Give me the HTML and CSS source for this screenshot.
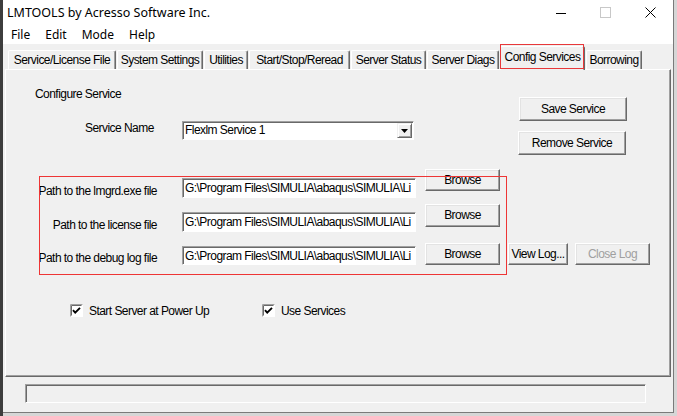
FILE: index.html
```html
<!DOCTYPE html>
<html>
<head>
<meta charset="utf-8">
<title>LMTOOLS</title>
<link rel="stylesheet" href="styles.css">
</head>
<body>
<div class="window">
  <div class="titlebar">
    <span class="title">LMTOOLS by Acresso Software Inc.</span>
    <div class="controls">
      <span class="ctl"><svg width="10" height="10" viewBox="0 0 10 10"><path d="M0 5.5H10" stroke="#000" stroke-width="1"/></svg></span>
      <span class="ctl"><svg width="11" height="11" viewBox="0 0 11 11"><rect x="0.5" y="0.5" width="10" height="10" fill="none" stroke="#c8c8c8" stroke-width="1"/></svg></span>
      <span class="ctl"><svg width="11" height="11" viewBox="0 0 11 11"><path d="M0.5 0.5L10.5 10.5M10.5 0.5L0.5 10.5" stroke="#000" stroke-width="1"/></svg></span>
    </div>
  </div>
  <div class="menubar">
    <span>File</span><span>Edit</span><span>Mode</span><span>Help</span>
  </div>
  <div class="tabs">
    <div class="tab t-license">Service/License File</div>
    <div class="tab t-system">System Settings</div>
    <div class="tab t-util">Utilities</div>
    <div class="tab t-start">Start/Stop/Reread</div>
    <div class="tab t-status">Server Status</div>
    <div class="tab t-diags">Server Diags</div>
    <div class="tab t-config active">Config Services</div>
    <div class="tab t-borrow">Borrowing</div>
  </div>
  <div class="panel">
    <div class="top">
      <div class="left">
        <div class="cs-title">Configure Service</div>
        <div class="svc-row">
          <span class="svc-label">Service Name</span>
          <div class="combo">
            <span class="combo-text">Flexlm Service 1</span>
            <span class="drop"><svg width="7" height="4" viewBox="0 0 7 4"><path d="M0 0H7L3.5 4Z" fill="#000"/></svg></span>
          </div>
        </div>
      </div>
      <div class="right">
        <button class="btn wide save">Save Service</button>
        <button class="btn wide">Remove Service</button>
      </div>
    </div>
    <div class="paths">
      <div class="annot"></div>
      <div class="prow r1">
        <span class="plabel">Path to the lmgrd.exe file</span>
        <div class="pinput">G:\Program Files\SIMULIA\abaqus\SIMULIA\Li</div>
        <button class="btn browse">Browse</button>
      </div>
      <div class="prow r2">
        <span class="plabel">Path to the license file</span>
        <div class="pinput">G:\Program Files\SIMULIA\abaqus\SIMULIA\Li</div>
        <button class="btn browse">Browse</button>
      </div>
      <div class="prow r3">
        <span class="plabel">Path to the debug log file</span>
        <div class="pinput">G:\Program Files\SIMULIA\abaqus\SIMULIA\Li</div>
        <button class="btn browse">Browse</button>
        <button class="btn viewlog">View Log...</button>
        <button class="btn closelog" disabled>Close Log</button>
      </div>
    </div>
    <div class="checks">
      <label class="chk-item first">
        <svg class="chk" width="13" height="13" viewBox="0 0 13 13"><rect x="0" y="0" width="13" height="13" fill="#fff"/><path d="M0.5 12.5V0.5H12.5" fill="none" stroke="#a0a0a0"/><path d="M1.5 11.5V1.5H11.5" fill="none" stroke="#696969"/><path d="M3 6.2L5.2 8.6L10 3.8" fill="none" stroke="#000" stroke-width="1.9"/></svg>
        <span>Start Server at Power Up</span>
      </label>
      <label class="chk-item">
        <svg class="chk" width="13" height="13" viewBox="0 0 13 13"><rect x="0" y="0" width="13" height="13" fill="#fff"/><path d="M0.5 12.5V0.5H12.5" fill="none" stroke="#a0a0a0"/><path d="M1.5 11.5V1.5H11.5" fill="none" stroke="#696969"/><path d="M3 6.2L5.2 8.6L10 3.8" fill="none" stroke="#000" stroke-width="1.9"/></svg>
        <span>Use Services</span>
      </label>
    </div>
  </div>
  <div class="footer">
    <div class="status"></div>
  </div>
</div>
</body>
</html>
```

FILE: styles.css
```css
* { box-sizing: border-box; }
html, body { margin: 0; padding: 0; }
body {
  width: 677px;
  height: 416px;
  overflow: hidden;
  background: linear-gradient(to right, #3d3d3d 0 3px, #d6d6d6 3px);
  font-family: "Liberation Sans", Arial, sans-serif;
  font-size: 12px;
  letter-spacing: -0.55px;
  color: #000;
}
.window {
  margin-left: 3px;
  width: 671px;
  height: 413px;
  background: #f0f0f0;
  border-right: 1px solid #7a7a7a;
  border-bottom: 1px solid #7a7a7a;
  display: flex;
  flex-direction: column;
}
.titlebar {
  height: 25px;
  background: #fff;
  display: flex;
  align-items: center;
  padding-left: 4px;
  font-family: "Noto Sans", "Open Sans", sans-serif;
  font-size: 12.5px;
  letter-spacing: 0;
}
.controls { margin-left: auto; display: flex; height: 100%; }
.ctl {
  width: 45px;
  height: 100%;
  display: flex;
  align-items: center;
  justify-content: center;
}
.menubar {
  height: 19px;
  background: #fff;
  display: flex;
  align-items: center;
  gap: 15px;
  padding-left: 8px;
  font-family: "Noto Sans", "Open Sans", sans-serif;
  font-size: 12px;
  letter-spacing: 0;
}
.tabs {
  height: 25px;
  display: flex;
  align-items: flex-end;
  gap: 1px;
  padding-left: 5px;
  position: relative;
  z-index: 1;
}
.tab {
  height: 19px;
  padding: 0;
  text-align: center;
  line-height: 18px;
  white-space: nowrap;
  background: #f0f0f0;
  border-top: 1px solid #fff;
  border-left: 1px solid #fff;
  border-right: 1px solid #696969;
  border-radius: 2px 2px 0 0;
  box-shadow: inset -1px 0 #a0a0a0;
}
.t-license { width: 108px; }
.t-system { width: 86px; }
.t-util { width: 44px; }
.t-start { width: 101px; }
.t-status { width: 75px; }
.t-diags { width: 72px; }
.t-config { width: 85px; }
.t-borrow { width: 56px; }
.tab.active {
  position: relative;
  height: 24px;
  margin-bottom: -1px;
  padding-top: 2px;
  line-height: 17px;
}
.tab.active::after {
  content: "";
  position: absolute;
  left: -1px;
  right: 0;
  top: -3px;
  bottom: 1px;
  border: 1px solid #e8383a;
}
.panel {
  margin-left: 2px;
  width: 666px;
  height: 308px;
  border: 1px solid;
  border-color: #fff #696969 #696969 #fff;
  box-shadow: inset -1px -1px #a0a0a0;
}
.top {
  display: flex;
  justify-content: space-between;
  height: 85px;
}
.left { padding: 17px 0 0 29px; }
.cs-title { line-height: 15px; }
.svc-row {
  display: flex;
  align-items: center;
  margin-top: 19px;
}
.svc-label {
  width: 147px;
  padding-left: 50px;
  line-height: 15px;
  margin-top: -4px;
}
.combo {
  width: 232px;
  height: 19px;
  display: flex;
  align-items: center;
  background: #fff;
  border: 1px solid;
  border-color: #a0a0a0 #fff #fff #a0a0a0;
  box-shadow: inset 1px 1px #696969;
  padding-left: 2px;
}
.combo-text { line-height: 15px; }
.drop {
  margin-left: auto;
  margin-right: 1px;
  width: 15px;
  height: 15px;
  display: flex;
  align-items: center;
  justify-content: center;
  background: #f0f0f0;
  border: 1px solid;
  border-color: #f0f0f0 #696969 #696969 #f0f0f0;
  box-shadow: inset 1px 1px #fff, inset -1px -1px #a0a0a0;
}
.right {
  padding-top: 27px;
  margin-right: 44px;
  display: flex;
  flex-direction: column;
  align-items: flex-end;
  gap: 10px;
}
.btn {
  font-family: inherit;
  font-size: 12px;
  letter-spacing: -0.55px;
  color: #000;
  background: #f0f0f0;
  border: 1px solid;
  border-color: #fff #696969 #696969 #fff;
  box-shadow: inset -1px -1px #a0a0a0, inset 1px 1px #e3e3e3;
  padding: 0;
  height: 24px;
  line-height: 15px;
  white-space: nowrap;
}
.btn.wide { width: 108px; }
.btn.save { margin-right: -1px; }
.paths {
  position: relative;
  margin-top: 14px;
  display: flex;
  flex-direction: column;
}
.annot {
  position: absolute;
  left: 33px;
  top: 7px;
  width: 468px;
  height: 99px;
  border: 1px solid #ee3535;
  pointer-events: none;
}
.prow {
  display: flex;
  align-items: flex-start;
}
.plabel {
  width: 151px;
  margin-right: 25px;
  text-align: right;
  line-height: 15px;
  white-space: nowrap;
}
.pinput {
  width: 234px;
  height: 20px;
  background: #fff;
  border: 1px solid;
  border-color: #a0a0a0 #fff #fff #a0a0a0;
  box-shadow: inset 1px 1px #696969;
  padding: 1px 0 0 2px;
  line-height: 16px;
  white-space: nowrap;
  overflow: hidden;
}
.browse { width: 75px; height: 22px; margin-left: 9px; }
.r1 { height: 35px; }
.r1 .plabel { margin-top: 15px; }
.r1 .pinput { margin-top: 9px; }
.r2 { height: 39px; }
.r2 .plabel { margin-top: 14px; }
.r2 .pinput { margin-top: 8px; }
.r2 .browse { height: 23px; }
.r3 { height: 22px; }
.r3 .plabel { margin-top: 8px; }
.r3 .pinput { margin-top: 3px; height: 19px; }
.viewlog { width: 60px; height: 22px; margin-left: 8px; }
.closelog { width: 75px; height: 22px; margin-left: 7px; color: #a0a0a0; }
.checks {
  display: flex;
  align-items: center;
  margin-top: 39px;
  padding-left: 64px;
  height: 13px;
}
.chk-item {
  display: flex;
  align-items: center;
  gap: 6px;
  line-height: 15px;
}
.chk-item span { position: relative; top: 1px; }
.chk-item.first { width: 192px; }
.chk { display: block; flex: none; }
.footer {
  flex: 1;
  padding: 7px 0 0 22px;
}
.status {
  width: 621px;
  height: 19px;
  border: 1px solid;
  border-color: #a0a0a0 #fff #fff #a0a0a0;
  box-shadow: inset 1px 1px #696969;
}
```
